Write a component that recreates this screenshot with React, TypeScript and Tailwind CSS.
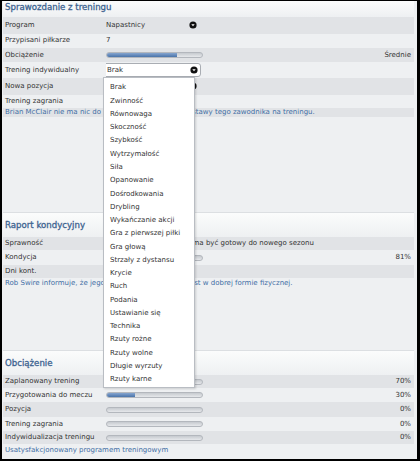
import React from "react";

const GRAY = "bg-[#e1e3e6]";
const LIGHT = "bg-[#eef0f2]";

function Icon() {
  return (
    <svg width="8" height="8" viewBox="0 0 8 8" className="shrink-0">
      <circle cx="4" cy="4" r="3.6" fill="#111" />
      <path d="M2.3 3.2 L5.7 3.2 L4 5.2 Z" fill="#fff" />
    </svg>
  );
}

function Bar({ pct }: { pct: number }) {
  return (
    <div className="relative w-[97px] h-[6px] rounded-[3px] border border-[#b3b7bd] bg-gradient-to-b from-[#c6cacf] to-[#e6e8eb] overflow-hidden">
      <div
        className="absolute left-0 top-0 bottom-0 bg-gradient-to-b from-[#86a5cf] to-[#4a74aa]"
        style={{ width: `${pct}%` }}
      />
    </div>
  );
}

function Row({
  label,
  h,
  gray,
  children,
  right,
}: {
  label?: string;
  h: string;
  gray: boolean;
  children?: React.ReactNode;
  right?: string;
}) {
  return (
    <div className={`flex items-center pl-[2px] pr-[3px] ${h} ${gray ? GRAY : LIGHT}`}>
      <div className="w-[101px] shrink-0 whitespace-nowrap">{label}</div>
      <div className="flex-1 flex items-center whitespace-nowrap overflow-hidden">{children}</div>
      {right && <div className="whitespace-nowrap">{right}</div>}
    </div>
  );
}

function LinkRow({ h, gray, text }: { h: string; gray: boolean; text: string }) {
  return (
    <div className={`flex items-center pl-[2px] ${h} ${gray ? GRAY : LIGHT} text-[#3f6ea5] whitespace-nowrap overflow-hidden`}>
      {text}
    </div>
  );
}

function Header({ text, tall }: { text: string; tall?: boolean }) {
  return (
    <div
      className={`flex items-end pl-[2px] ${tall ? "h-[24px] pb-[5px]" : "h-[16px] pb-[3px]"} bg-gradient-to-b from-[#fbfcfc] to-[#eef0f2] text-[8.6px] text-[#3d6390] [-webkit-text-stroke:0.3px_#3d6390]`}
    >
      {text}
    </div>
  );
}

const items = [
  "Brak",
  "Zwinność",
  "Równowaga",
  "Skoczność",
  "Szybkość",
  "Wytrzymałość",
  "Siła",
  "Opanowanie",
  "Dośrodkowania",
  "Drybling",
  "Wykańczanie akcji",
  "Gra z pierwszej piłki",
  "Gra głową",
  "Strzały z dystansu",
  "Krycie",
  "Ruch",
  "Podania",
  "Ustawianie się",
  "Technika",
  "Rzuty rożne",
  "Rzuty wolne",
  "Długie wyrzuty",
  "Rzuty karne",
];

export default function App() {
  return (
    <div
      className="relative w-[420px] h-[461px] bg-black overflow-hidden text-[7px] text-[#333333]"
      style={{ fontFamily: '"DejaVu Sans", Verdana, sans-serif' }}
    >
      <div className="absolute left-[2px] top-[1px] w-[415px] h-[458px] bg-[#eef0f2] flex flex-col pr-[3px] pl-[1px]">
        {/* Section 1 */}
        <Header text="Sprawozdanie z treningu" />
        <Row label="Program" h="h-[16.5px]" gray>
          <div className="w-[92px] flex items-center justify-between">
            <span>Napastnicy</span>
            <span className="mr-[1px]"><Icon /></span>
          </div>
        </Row>
        <Row label="Przypisani piłkarze" h="h-[14px]" gray={false}>
          7
        </Row>
        <Row label="Obciążenie" h="h-[14.5px]" gray right="Średnie">
          <Bar pct={74} />
        </Row>
        <Row label="Trening indywidualny" h="h-[16px]" gray={false}>
          <div className="-ml-[5px] w-[100px] h-[14px] rounded-[3px] border border-[#a9adb3] bg-white flex items-center justify-between pl-[5px] pr-[2px]">
            <span>Brak</span>
            <Icon />
          </div>
        </Row>
        <Row label="Nowa pozycja" h="h-[16.5px]" gray>
          <div className="w-[92px] flex items-center justify-between">
            <span>Bez zmian</span>
            <span className="mr-[1px]"><Icon /></span>
          </div>
        </Row>
        <Row label="Trening zagrania" h="h-[13px]" gray={false} />
        <LinkRow
          h="h-[9.5px]"
          gray
          text="Brian McClair nie ma nic do powiedzenia na temat postawy tego zawodnika na treningu."
        />
        <div className="h-[95px] shrink-0" />
        <div className="h-[1px] bg-[#dcdfe2] shrink-0" />

        {/* Section 2 */}
        <Header text="Raport kondycyjny" tall />
        <Row label="Sprawność" h="h-[13px]" gray>
          Po wyleczeniu zawodnik ma być gotowy do nowego sezonu
        </Row>
        <Row label="Kondycja" h="h-[15px]" gray={false} right="81%">
          <Bar pct={81} />
        </Row>
        <Row label="Dni kont." h="h-[13px]" gray />
        <LinkRow
          h="h-[11px]"
          gray={false}
          text="Rob Swire informuje, że jego zdaniem Brian McClair jest w dobrej formie fizycznej."
        />
        <div className="h-[61px] shrink-0" />
        <div className="h-[1px] bg-[#dcdfe2] shrink-0" />

        {/* Section 3 */}
        <Header text="Obciążenie" tall />
        <Row label="Zaplanowany trening" h="h-[13px]" gray right="70%">
          <Bar pct={70} />
        </Row>
        <Row label="Przygotowania do meczu" h="h-[14px]" gray={false} right="30%">
          <Bar pct={29} />
        </Row>
        <Row label="Pozycja" h="h-[15px]" gray right="0%">
          <Bar pct={0} />
        </Row>
        <Row label="Trening zagrania" h="h-[14px]" gray={false} right="0%">
          <Bar pct={0} />
        </Row>
        <Row label="Indywidualizacja treningu" h="h-[13px]" gray right="0%">
          <Bar pct={0} />
        </Row>
        <LinkRow h="h-[13px]" gray={false} text="Usatysfakcjonowany programem treningowym" />
      </div>

      {/* Dropdown list */}
      <div className="absolute left-[103px] top-[77px] w-[92px] h-[311px] bg-white border border-[#b9bdc3] shadow-[1px_1px_2px_rgba(0,0,0,0.15)] pt-[3px] flex flex-col">
        {items.map((it) => (
          <div key={it} className="h-[13.27px] flex items-center pl-[6px] whitespace-nowrap">
            {it}
          </div>
        ))}
      </div>
    </div>
  );
}
